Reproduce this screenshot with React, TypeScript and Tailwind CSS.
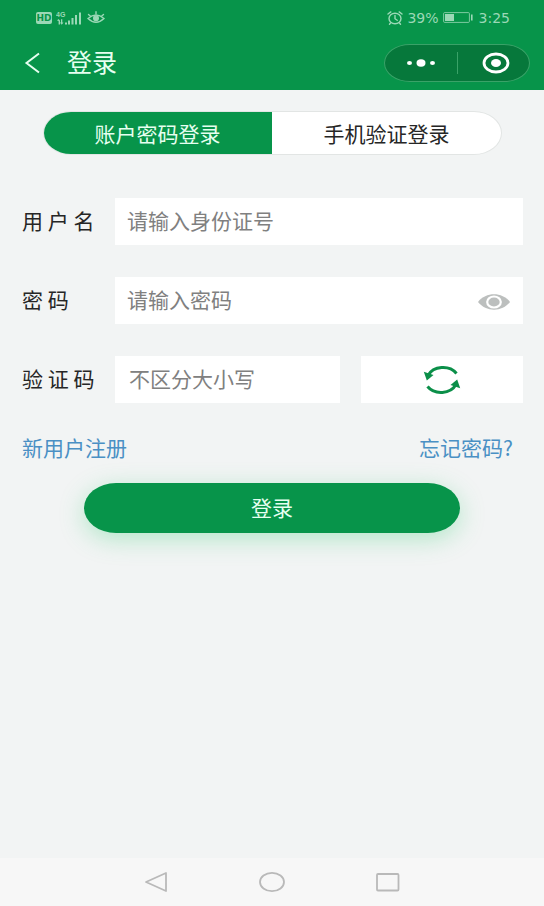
import type { ReactNode } from "react";

function StatusBar() {
  return (
    <div className="flex h-[35px] items-center justify-between pl-9 pr-8 text-[#9bd8b6]">
      <div className="flex items-center gap-1">
        <span className="flex h-3 w-4 items-center justify-center rounded-xs bg-[#9bd8b6] font-['DejaVu_Sans'] text-[9px] font-bold leading-3 text-[#07944a]">
          HD
        </span>
        <svg width="27" height="16" viewBox="0 0 27 16" fill="currentColor" aria-hidden="true">
          <text x="0" y="7" fontSize="7" fontWeight="bold" fontFamily="Liberation Sans, sans-serif">4G</text>
          <path d="M1 10.5l1.5-1.5 1.5 1.5v4H2.6v-3.4zM5 9.3h1.3v3.2h1.2l-1.8 2.2-1.8-2.2H5z" />
          <rect x="9" y="12.5" width="2" height="2" />
          <rect x="12" y="10.5" width="2" height="4" />
          <rect x="15.5" y="8" width="2" height="6.5" />
          <rect x="19" y="5" width="2" height="9.500" />
          <rect x="23" y="2.500" width="2" height="12" />
        </svg>
        <svg width="18" height="13" viewBox="0 0 18 13" fill="none" stroke="currentColor" strokeWidth="1.4" strokeLinecap="round" aria-hidden="true">
          <path d="M1 7.500Q9 0.500 17 7.500Q9 15 1 7.500Z" />
          <path d="M1.500 3.500l2 1.700M16.500 3.500l-2 1.700M9 .8v2" />
          <circle cx="9" cy="7.200" r="2.300" fill="currentColor" />
        </svg>
      </div>
      <div className="flex items-center gap-1 font-['DejaVu_Sans'] text-sm">
        <svg width="16" height="14" viewBox="0 0 16 14" fill="none" stroke="currentColor" strokeWidth="1.4" strokeLinecap="round" aria-hidden="true">
          <ellipse cx="8" cy="7.500" rx="6" ry="5.300" />
          <path d="M1 3L3.800 .9M15 3L12.200 .9M8 4.500v3.200l2.200 1.600M3.500 12l-1 1.200M12.500 12l1 1.200" />
        </svg>
        <span>39%</span>
        <svg width="30" height="11" viewBox="0 0 30 11" fill="none" aria-hidden="true">
          <rect x=".6" y=".6" width="25.800" height="9.800" rx="1" stroke="currentColor" strokeOpacity=".8" />
          <rect x="2" y="2" width="9" height="7" fill="currentColor" />
          <rect x="28" y="2.500" width="1.600" height="6" fill="currentColor" />
        </svg>
        <span className="px-0.5">3:25</span>
      </div>
    </div>
  );
}

function TitleBar() {
  return (
    <div className="flex h-[55px] items-center pl-6 pr-[14px]">
      <button type="button" aria-label="返回" className="text-[#e6fff0]">
        <svg width="17" height="22" viewBox="0 0 17 22" fill="none" stroke="currentColor" strokeWidth="2">
          <path d="M15 1.500L2.500 11L15 20.500" />
        </svg>
      </button>
      <h1 className="flex-1 pb-1 pl-[26px] text-[25px] leading-8 text-[#e6fff0]">登录</h1>
      <div className="flex h-[38px] w-[146px] items-center rounded-[26px/19px] border border-[#3aa268] bg-[#06783b] text-white">
        <button type="button" aria-label="更多" className="flex w-[72px] justify-center">
          <svg width="30" height="10" viewBox="0 0 30 10" fill="currentColor">
            <ellipse cx="3.500" cy="5" rx="2.500" ry="2.100" />
            <ellipse cx="15" cy="5" rx="4.500" ry="3.700" />
            <ellipse cx="26.500" cy="5" rx="2.500" ry="2.100" />
          </svg>
        </button>
        <span className="h-[22px] w-px bg-[#3aa268]" />
        <button type="button" aria-label="关闭" className="flex flex-1 justify-center pl-1">
          <svg width="28" height="22" viewBox="0 0 28 22">
            <ellipse cx="14" cy="11" rx="12" ry="9" fill="none" stroke="currentColor" strokeWidth="2.800" />
            <ellipse cx="14" cy="11" rx="5" ry="4" fill="currentColor" />
          </svg>
        </button>
      </div>
    </div>
  );
}

function Field({ id, label, children }: { id: string; label: string; children: ReactNode }) {
  return (
    <div className="flex items-center">
      <label htmlFor={id} className="w-[93px] shrink-0 whitespace-nowrap pb-1 text-[#262626]">
        {label}
      </label>
      {children}
    </div>
  );
}

const inputClass =
  "h-[47px] w-full min-w-0 bg-white pb-1 text-[#333] outline-none placeholder:text-[#808080] placeholder:opacity-100";

export default function App() {
  return (
    <div className="flex min-h-screen flex-col bg-[#f2f4f4] font-['Noto_Sans_CJK_SC',sans-serif] text-[21px] leading-7">
      <header className="bg-[#07944a]">
        <StatusBar />
        <TitleBar />
      </header>

      <main className="flex-1 pl-[22px] pr-[21px] pt-[21px]">
        <div className="mx-[21px] flex h-[44px] overflow-hidden rounded-[28px/22px] border border-[#e2e5e4] bg-white">
          <button type="button" className="-my-px -ml-px flex-1 bg-[#07944a] text-[#e6fff0]">
            账户密码登录
          </button>
          <button type="button" className="flex-1 text-[#262626]">
            手机验证登录
          </button>
        </div>

        <form className="mt-[43px]" onSubmit={(e) => e.preventDefault()}>
          <div className="flex flex-col gap-8">
            <Field id="user" label="用 户 名">
              <input id="user" type="text" placeholder="请输入身份证号" className={`${inputClass} px-3`} />
            </Field>
            <Field id="password" label="密 码">
              <div className="flex flex-1 items-center bg-white pr-3">
                <input id="password" type="password" placeholder="请输入密码" className={`${inputClass} px-3`} />
                <button type="button" aria-label="显示密码" className="shrink-0 pt-0.5">
                  <svg width="34" height="16" viewBox="0 0 34 16">
                    <path d="M1 8C9-2.200 25-2.200 33 8C25 18.200 9 18.200 1 8Z" fill="#bcbfbe" />
                    <ellipse cx="17" cy="8" rx="6.800" ry="5.500" fill="#bcbfbe" stroke="#fff" strokeWidth="2.200" />
                  </svg>
                </button>
              </div>
            </Field>
            <Field id="captcha" label="验 证 码">
              <div className="grid flex-1 grid-cols-[225fr_162fr] gap-[21px]">
                <input id="captcha" type="text" placeholder="不区分大小写" className={`${inputClass} px-[14px]`} />
                <button type="button" aria-label="刷新验证码" className="flex items-center justify-center bg-white">
                  <svg width="38" height="32" viewBox="0 0 38 32" fill="none" stroke="#0b8f49" strokeWidth="3">
                    <path d="M33.500 9.500A16.500 13.800 0 0 0 5 11.500" />
                    <path d="M4.500 22.500A16.500 13.800 0 0 0 33 20.500" />
                    <path d="M.8 7.800L10.500 11L3.800 16.500Z" fill="#0b8f49" stroke="none" />
                    <path d="M37.200 24.200L27.500 21L34.200 15.500Z" fill="#0b8f49" stroke="none" />
                  </svg>
                </button>
              </div>
            </Field>
          </div>

          <div className="mt-[30px] flex justify-between pr-[10px] text-[#4a90c4]">
            <a href="#register">新用户注册</a>
            <a href="#forgot">忘记密码?</a>
          </div>

          <div className="mt-[22px] pl-[62px] pr-[63px]">
            <button
              type="submit"
              className="h-[50px] w-full rounded-[32px/25px] bg-[#07944a] pb-0.5 text-[#e6fff0] shadow-[0_6px_24px_rgba(60,205,120,0.35)]"
            >
              登录
            </button>
          </div>
        </form>
      </main>

      <nav className="flex h-12 items-center justify-center gap-[90px] bg-[#f7f7f7] text-[#b9b9b9]">
        <button type="button" aria-label="后退">
          <svg width="26" height="22" viewBox="0 0 26 22" fill="none" stroke="currentColor" strokeWidth="1.800" strokeLinejoin="round">
            <path d="M3 11L23 2V20Z" />
          </svg>
        </button>
        <button type="button" aria-label="主页">
          <svg width="26" height="22" viewBox="0 0 26 22" fill="none" stroke="currentColor" strokeWidth="1.800">
            <ellipse cx="13" cy="11" rx="12" ry="9.200" />
          </svg>
        </button>
        <button type="button" aria-label="最近任务">
          <svg width="26" height="22" viewBox="0 0 26 22" fill="none" stroke="currentColor" strokeWidth="1.800">
            <rect x="2" y="3" width="21.500" height="16.500" rx="1" />
          </svg>
        </button>
      </nav>
    </div>
  );
}
